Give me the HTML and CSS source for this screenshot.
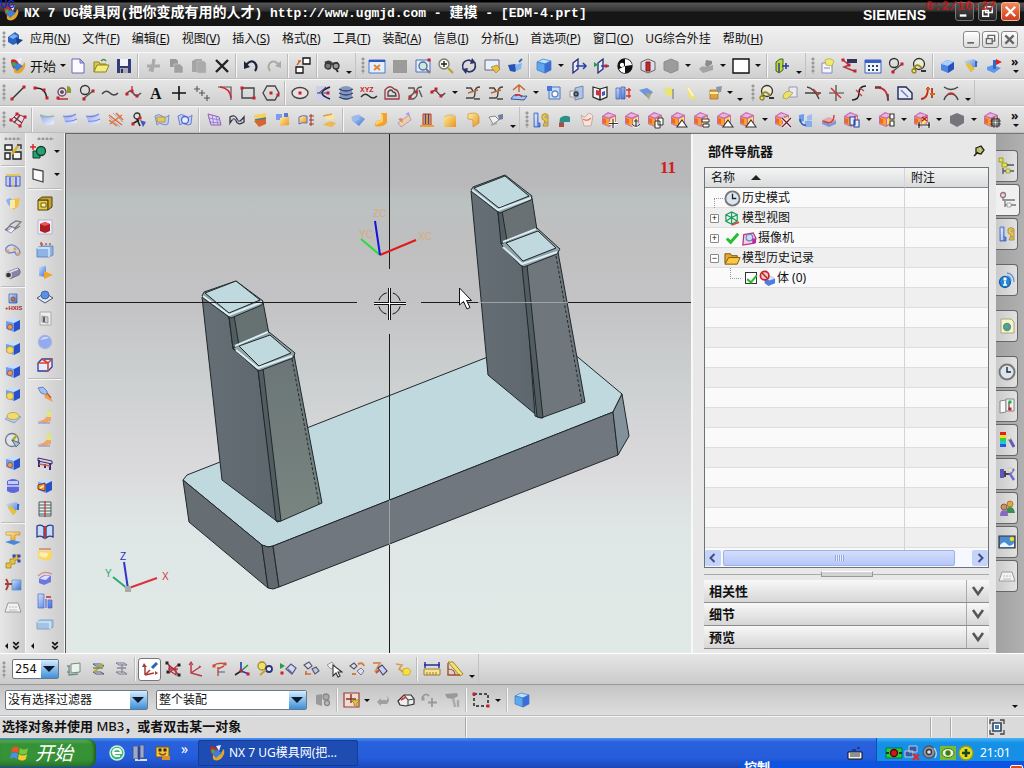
FILE: index.html
```html
<!DOCTYPE html>
<html lang="zh-CN">
<head>
  <meta charset="UTF-8">
  <title>NX 7 - 建模 - EDM-4.prt</title>
  <link rel="stylesheet" href="styles.css">
</head>
<body>

  <!-- shared gradients for the icons -->
  <svg class="defs" aria-hidden="true">
    <defs>
      <linearGradient id="blue" x1="0" y1="0" x2="1" y2="1"><stop offset="0" stop-color="#cfe2fb"/><stop offset="1" stop-color="#3f6fd8"/></linearGradient>
      <linearGradient id="pale" x1="0" y1="0" x2="1" y2="1"><stop offset="0" stop-color="#8fa6ec"/><stop offset="1" stop-color="#f2f5ff"/></linearGradient>
      <linearGradient id="gold" x1="0" y1="0" x2="1" y2="1"><stop offset="0" stop-color="#fff0a0"/><stop offset="1" stop-color="#eb9320"/></linearGradient>
      <linearGradient id="gray" x1="0" y1="0" x2="1" y2="1"><stop offset="0" stop-color="#f2f2f4"/><stop offset="1" stop-color="#8b8b93"/></linearGradient>
      <linearGradient id="front" x1="0" y1="0" x2="0" y2="1"><stop offset="0" stop-color="#6b7577"/><stop offset="1" stop-color="#788580"/></linearGradient>
      <linearGradient id="side" x1="0" y1="0" x2="1" y2="0"><stop offset="0" stop-color="#666f75"/><stop offset="1" stop-color="#5e666d"/></linearGradient>
    </defs>
  </svg>

  <header class="titlebar">
    <span class="icon" data-icon="nx"></span>
    <h1>NX 7 UG<span class="cn">模具网</span>(<span class="cn">把你变成有用的人才</span>) http://www.ugmjd.com - <span class="cn">建模</span> - [EDM-4.prt]</h1>
    <span class="brand">SIEMENS</span>
    <div class="win-buttons">
      <button class="win" data-icon="wmin" aria-label="最小化"></button>
      <button class="win" data-icon="wmax" aria-label="还原"></button>
      <button class="win close" data-icon="wclose" aria-label="关闭"></button>
    </div>
    <span class="osd">0:2/10:37</span>
    <span class="mark">UG</span>
  </header>

  <nav class="menubar">
    <span class="grip"></span>
    <span class="icon" data-icon="app"></span>
    <button>应用(<u>N</u>)</button>
    <button>文件(<u>F</u>)</button>
    <button>编辑(<u>E</u>)</button>
    <button>视图(<u>V</u>)</button>
    <button>插入(<u>S</u>)</button>
    <button>格式(<u>R</u>)</button>
    <button>工具(<u>T</u>)</button>
    <button>装配(<u>A</u>)</button>
    <button>信息(<u>I</u>)</button>
    <button>分析(<u>L</u>)</button>
    <button>首选项(<u>P</u>)</button>
    <button>窗口(<u>O</u>)</button>
    <button>UG综合外挂</button>
    <button>帮助(<u>H</u>)</button>
    <div class="mdi-buttons">
      <button class="mdi" data-icon="mmin" aria-label="最小化窗口"></button>
      <button class="mdi" data-icon="mmax" aria-label="还原窗口"></button>
      <button class="mdi" data-icon="mclose" aria-label="关闭窗口"></button>
    </div>
  </nav>

  <div class="bar-row">
    <div class="toolbar"><span class="grip"></span><button class="start-app"><span class="icon" data-icon="nx"></span>开始<i class="tri"></i></button><span class="tools" data-tools="new open save | cut copy paste del | undo redo | arrange | find V"></span></div>
    <div class="toolbar"><span class="grip"></span><span class="tools" data-tools="fit grayrect zoomwin zoom rotate pan persp | bluecube v wireA wireB bw section grayhex v grayplane v blank v | showhide V"></span></div>
    <div class="toolbar"><span class="grip"></span><span class="tools" data-tools="sketch tree sheet circline hook | block blend pushpull"></span></div>
    <button class="more" aria-label="更多"></button>
  </div>

  <div class="bar-row">
    <div class="toolbar"><span class="grip"></span><span class="tools" data-tools="line arc pocket circline spline splinept text plus points fillet rect hexa | ellipse conic helix xyz offset joinA bridgeC v joinB joinB project v sheetA sheetB book wrap leaf flag pen bucket t V"></span></div>
    <div class="toolbar"><span class="grip"></span><span class="tools" data-tools="hook note trimA trimB scurve corner chamfer stretch arch V"></span></div>
  </div>

  <div class="bar-row">
    <div class="toolbar"><span class="grip"></span><span class="tools" data-tools="mesh | surfA surfB surfB studio sweep patch surfC | net ribbon goldlayer goldcopy dims dune | globe bend roll drum tub pipe screw V"></span></div>
    <div class="toolbar"><span class="grip"></span><span class="tools" data-tools="pins boot jig gplus ganchor gcopy gtri glist gtri gtri v gx bluelink redtray gpaste v gboxes v gdim v darkhex v gframe"></span></div>
    <button class="more" aria-label="更多"></button>
  </div>

  <main class="work">
    <aside class="side narrow">
      <span class="grip-h"></span>
      <span class="tools" data-tools="layout | holes goldfan wing wire tube | axis cubeA cubeB cubeA cubeB disk gauge cubeA canister blend | tee stairs clamp tray"></span>
      <span class="side-end"><i class="tri left"></i><span class="icon chev" data-icon="down2"></span></span>
    </aside>
    <aside class="side wide">
      <span class="grip-h"></span>
      <div class="side-drop"><span class="tools" data-tools="union v"></span></div>
      <div class="side-drop"><span class="tools" data-tools="plane v"></span></div>
      <span class="tools" data-tools="| goldbox redcube bluebox goldarrow boss hole sphere redblue | screwB foot foot bracket goldface ladder bookB paper dome columns slab"></span>
      <span class="side-end"><i class="tri left"></i><span class="icon chev" data-icon="down2"></span></span>
    </aside>

    <section class="viewport">
      <svg class="scene" viewBox="66 134 625 519" preserveAspectRatio="xMidYMid slice">
        <g stroke="#20282c" stroke-width="1" stroke-linejoin="round">
          <!-- base plate -->
          <path d="M183 480L187 475L549 333L622 394L613 412L273 546L268 547L262 545Z" fill="#c0d9de"/>
          <path d="M183 480L262 545L268 588L189 522Z" fill="#666e74"/>
          <path d="M262 545L268 547L273 546L279 587L273 589L268 588Z" fill="#62696e"/>
          <path d="M273 546L613 412L618 455L279 587Z" fill="#70777e"/>
          <path d="M613 412L622 394L629 436L618 455Z" fill="#83929a"/>
          <!-- left post -->
          <path d="M202 297L229 317L233 349L258 369L278 522L222 480Z" fill="url(#side)"/>
          <path d="M229 317L263 302L269 334L234 349Z" fill="#667171"/>
          <path d="M258 369L294 355L322 503L281 521L277 522Z" fill="url(#front)"/>
          <path d="M258 369L263 368L281 521L276 521Z" fill="#525d61"/>
          <path d="M229 317L234 315L239 346L233 349Z" fill="#525d61"/>
          <path d="M202 296L204 292L236 281L263 301L262 305L231 318L228 316Z" fill="#91a2a8"/>
          <path d="M205 293L236 281L260 300L229 313Z" fill="#c0d9de"/>
          <path d="M233 348L269 332L295 353L293 358L259 371L256 369Z" fill="#91a2a8"/>
          <path d="M239 346L270 335L291 353L259 366Z" fill="#c0d9de"/>
          <path d="M203 296L229 315L262 302M235 346L268 332M236 350L258 368L292 356" fill="none" stroke="#d9eef2" stroke-width="2"/>
          <path d="M292 359L319 504" fill="none" stroke-dasharray="3 2"/>
          <!-- right post -->
          <path d="M471 191L498 212L502 243L524 266L540 418L488 375Z" fill="url(#side)"/>
          <path d="M498 212L532 198L537 230L502 245Z" fill="#697175"/>
          <path d="M524 266L558 252L585 402L541 418L535 416Z" fill="#6f777c"/>
          <path d="M522 266L527 265L543 418L537 417Z" fill="#525d61"/>
          <path d="M498 212L502 211L507 241L501 244Z" fill="#525d61"/>
          <path d="M471 190L473 187L505 175L532 196L531 200L500 213L497 211Z" fill="#91a2a8"/>
          <path d="M474 188L505 176L529 196L499 208Z" fill="#c0d9de"/>
          <path d="M501 244L537 228L560 249L557 254L524 267L520 265Z" fill="#91a2a8"/>
          <path d="M506 243L538 231L556 248L523 261Z" fill="#c0d9de"/>
          <path d="M472 190L498 210L531 198M503 242L536 229M503 247L522 264L557 252" fill="none" stroke="#d9eef2" stroke-width="2"/>
          <path d="M556 256L582 403" fill="none" stroke-dasharray="3 2"/>
        </g>
        <!-- crosshair -->
        <path d="M66 302.5H357M421 302.5H691M389.500 134V269M389.500 334V653" stroke="#1c1c1c" fill="none"/>
        <path d="M478 302.500H568M389.500 500V545" stroke="#9ea4a6" fill="none"/>
        <circle cx="389.500" cy="303.500" r="11" fill="none" stroke="#111" stroke-dasharray="11 6.300" stroke-dashoffset="-3"/>
        <path d="M374 303.500H406M389.500 288V320" stroke="#111" stroke-width="3" fill="none"/>
        <path d="M374 303.500H406M389.500 288V320" stroke="#fff" fill="none"/>
        <!-- work coordinate system -->
        <g stroke-width="2" fill="none">
          <path d="M380 255L416 240" stroke="#e01818"/>
          <path d="M380 255L361 239" stroke="#27dd3a"/>
          <path d="M380 255L375 221" stroke="#1414dd"/>
          <path d="M129 588L157 578" stroke="#d8333f"/>
          <path d="M128 589L113 577" stroke="#27ab70"/>
          <path d="M128 589L124 562" stroke="#3333d0"/>
        </g>
        <rect x="125" y="586" width="6" height="6" fill="#aaa"/>
        <g class="axis-label">
          <text class="faint" x="373" y="217">ZC</text>
          <text class="faint" x="359" y="238">YC</text>
          <text class="faint" x="418" y="240">XC</text>
          <text x="120" y="560" fill="#2b2bc8">Z</text>
          <text x="105" y="577" fill="#27ab70">Y</text>
          <text x="162" y="580" fill="#d8333f">X</text>
        </g>
        <path d="M459.500 288V305L463.500 301.500L467 309L470 307.500L466.500 300.500H471.500Z" fill="#fff" stroke="#111"/>
        <text class="frame-no" x="660" y="173">11</text>
      </svg>
    </section>

    <section class="navigator">
      <div class="nav-head"><h2>部件导航器</h2><span class="icon" data-icon="pin"></span></div>
      <div class="tree-box">
        <table class="tree">
          <thead>
            <tr><th>名称 <i class="sort"></i></th><th>附注</th></tr>
          </thead>
          <tbody>
            <tr><td><div class="node"><i class="leaf"></i><span class="icon" data-icon="clock"></span>历史模式</div></td><td></td></tr>
            <tr><td><div class="node"><button class="exp" aria-label="展开">+</button><span class="icon" data-icon="views"></span>模型视图</div></td><td></td></tr>
            <tr><td><div class="node"><button class="exp" aria-label="展开">+</button><span class="icon" data-icon="tick"></span><span class="icon" data-icon="camera"></span>摄像机</div></td><td></td></tr>
            <tr><td><div class="node"><button class="exp" aria-label="折叠">−</button><span class="icon" data-icon="folder"></span>模型历史记录</div></td><td></td></tr>
            <tr><td><div class="node child"><i class="elbow"></i><input type="checkbox" id="body0" checked><span class="icon" data-icon="body"></span><label for="body0">体 (0)</label></div></td><td></td></tr>
            <tr class="rest"><td></td><td></td></tr>
          </tbody>
        </table>
        <div class="hscroll">
          <button class="arrow" aria-label="向左"><svg viewBox="0 0 16 16"><path d="M9.500 4L5.500 8L9.500 12" fill="none" stroke="#3c4f86" stroke-width="2"/></svg></button>
          <div class="thumb"><i></i></div>
          <button class="arrow" aria-label="向右"><svg viewBox="0 0 16 16"><path d="M6.500 4L10.500 8L6.500 12" fill="none" stroke="#3c4f86" stroke-width="2"/></svg></button>
        </div>
      </div>
      <div class="splitter"><i></i></div>
      <button class="fold"><span>相关性</span><i><svg viewBox="0 0 14 12"><path d="M2 2L7 9L12 2" fill="none" stroke="#555" stroke-width="2.500"/></svg></i></button>
      <button class="fold"><span>细节</span><i><svg viewBox="0 0 14 12"><path d="M2 2L7 9L12 2" fill="none" stroke="#555" stroke-width="2.500"/></svg></i></button>
      <button class="fold"><span>预览</span><i><svg viewBox="0 0 14 12"><path d="M2 2L7 9L12 2" fill="none" stroke="#555" stroke-width="2.500"/></svg></i></button>
    </section>

    <div class="resource-tabs">
      <button data-icon="tabasm" aria-label="装配导航器"></button>
      <button data-icon="tabpart" aria-label="部件导航器" class="active"></button>
      <button data-icon="pins" aria-label="重用库"></button>
      <button data-icon="info" aria-label="HD3D 工具" class="apart"></button>
      <button data-icon="web" aria-label="浏览器" class="apart"></button>
      <button data-icon="clock" aria-label="历史记录" class="apart"></button>
      <button data-icon="palette" aria-label="系统材料"></button>
      <button data-icon="rainbow" aria-label="可视化"></button>
      <button data-icon="process" aria-label="加工向导"></button>
      <button data-icon="roles" aria-label="角色"></button>
      <button data-icon="scenery" aria-label="系统场景"></button>
      <button data-icon="tray" aria-label="面板"></button>
    </div>
  </main>

  <div class="bottom-row">
    <div class="toolbar"><span class="grip"></span><label class="combo layer"><select aria-label="工作图层"><option>254</option></select></label><span class="tools" data-tools="layerA layerB layerC | wcs! wcsorg axes wcsrot axesRGB sketchy play move pick swap orient glow | ruler angle V"></span></div>
  </div>

  <div class="select-row">
    <label class="combo filter"><select aria-label="选择过滤器"><option>没有选择过滤器</option></select></label>
    <label class="combo scope"><select aria-label="选择范围"><option>整个装配</option></select></label>
    <span class="tools" data-tools="gears | snap t arrowgray house grayplus hammer | marquee v | bluecube"></span>
    <i class="tri row-end"></i>
  </div>

  <footer class="status">
    <p>选择对象并使用 <span class="key">MB3</span>，或者双击某一对象</p>
    <span class="cell wide-cell"></span>
    <span class="cell c1"></span>
    <span class="cell c2"></span>
    <span class="cell c3"><span class="icon" data-icon="full"></span></span>
  </footer>

  <div class="taskbar">
    <button class="start"><svg viewBox="0 0 20 18"><path d="M2 4Q6 1 9 4L8 9Q5 6 1 9Z" fill="#f0522a"/><path d="M10 4Q14 7 18 4L17 9Q13 12 9 9Z" fill="#7cc83c"/><path d="M1 10Q5 7 8 10L7 15Q4 12 0 15Z" fill="#4a8ff0"/><path d="M9 10Q13 13 17 10L16 15Q12 18 8 15Z" fill="#fbc834"/></svg>开始</button>
    <div class="quick">
      <span class="icon" data-icon="ie"></span>
      <span class="icon" data-icon="servers"></span>
      <span class="icon" data-icon="smile"></span>
      <span class="chevs">»</span>
    </div>
    <button class="task"><span class="icon" data-icon="nx"></span>NX 7 UG模具网(把...</button>
    <span class="icon keyboard" data-icon="keyboard"></span>
    <div class="tray">
      <span class="icon" data-icon="rec"></span>
      <span class="icon" data-icon="net2"></span>
      <span class="icon" data-icon="speaker"></span>
      <span class="icon" data-icon="nvidia"></span>
      <span class="icon" data-icon="guard"></span>
      <time>21:01</time>
    </div>
    <div class="popup"><span>控制</span><i></i></div>
  </div>

  <script src="app.js"></script>
</body>
</html>
```

FILE: styles.css
```css
* {
  box-sizing: border-box;
}

body {
  margin: 0;
  height: 100vh;
  overflow: hidden;
  display: flex;
  flex-direction: column;
  background: #d6d6d6;
  color: #111;
  font-family: "Noto Sans", "Noto Sans CJK SC", sans-serif;
  font-size: 12px;
  line-height: 16px;
}

button, select, input {
  font: inherit;
  color: inherit;
}

button {
  border: 0;
  padding: 0;
  background: none;
  cursor: pointer;
}

.defs {
  position: absolute;
  width: 0;
  height: 0;
}

.icon {
  display: inline-flex;
  flex: none;
}

.icon svg, .tool svg {
  width: 18px;
  height: 18px;
  display: block;
}

/* title */
.titlebar {
  position: relative;
  height: 26px;
  flex: none;
  display: flex;
  align-items: center;
  padding: 0 4px 0 2px;
  background: linear-gradient(#000 0, #000 2px, #555 3px, #333 11px, #161616 12px, #161616);
  color: #fff;
}

.titlebar h1 {
  margin: 0 0 0 4px;
  flex: 1;
  font: bold 13px/20px "Liberation Mono", "Noto Sans CJK SC", monospace;
  white-space: pre;
}

.titlebar .cn {
  font-size: 14px;
}

.brand {
  font: bold 14px/20px "Liberation Sans", sans-serif;
  margin: 3px 29px 0 0;
}

.win-buttons, .mdi-buttons {
  display: flex;
  gap: 4px;
}

.win {
  width: 19px;
  height: 19px;
  margin-bottom: 4px;
  border: 1px solid #777;
  border-radius: 3px;
  background: linear-gradient(#555, #222);
}

.win.close {
  background: linear-gradient(#f08a5c, #d23c1c);
  border-color: #f0b8a0;
}

.win svg, .mdi svg {
  display: block;
  width: 100%;
  height: 100%;
}

.osd {
  position: absolute;
  right: 28px;
  top: 0;
  color: #d51414;
  opacity: 0.8;
  font: bold 13px/14px "Liberation Mono", monospace;
}

.mark {
  position: absolute;
  left: 0;
  top: 0;
  color: #2626b4;
  font: bold 10px/10px "Liberation Sans", sans-serif;
}

/* menu */
.menubar {
  height: 26px;
  flex: none;
  display: flex;
  align-items: center;
  padding-right: 6px;
  background: linear-gradient(#f1f1f1, #e2e2e2);
}

.menubar .icon {
  margin-right: 6px;
}

.menubar > button {
  margin-right: 12px;
  white-space: nowrap;
}

.mdi-buttons {
  margin-left: auto;
  gap: 2px;
}

.mdi {
  width: 17px;
  height: 17px;
  border: 1px solid #888;
  border-radius: 3px;
  background: linear-gradient(#fff, #dcdcdc);
}

/* toolbars */
.bar-row {
  height: 27px;
  flex: none;
  display: flex;
  gap: 3px;
  border-top: 1px solid #f8f8f8;
  border-bottom: 1px solid #bdbdbd;
  background: linear-gradient(#e6e6e6, #cfcfcf);
}

.toolbar {
  display: flex;
  align-items: center;
  border-right: 1px solid #c2c2c2;
}

.bar-row .toolbar:nth-last-child(2) {
  border-right: 0;
}

.grip {
  width: 6px;
  height: 17px;
  flex: none;
  background: radial-gradient(circle, #999 1px, transparent 2px) 2px 0 / 4px 4px repeat-y;
}

.tools {
  display: flex;
  align-items: center;
}

.tool {
  width: 23px;
  height: 23px;
  display: flex;
  flex: none;
  align-items: center;
  justify-content: center;
}

.tool.on {
  border: 1px solid #777;
  border-radius: 3px;
  background: #fff;
}

.sep {
  width: 6px;
  height: 24px;
  flex: none;
  background: linear-gradient(90deg, transparent 2px, #bbb 2px, #bbb 3px, #f6f6f6 3px, #f6f6f6 4px, transparent 4px);
}

.drop {
  width: 12px;
  height: 23px;
  flex: none;
  display: flex;
  align-items: center;
  justify-content: center;
}

.drop.tight {
  width: 8px;
}

.drop.over {
  align-items: flex-end;
  padding-bottom: 3px;
}

.tri {
  display: block;
  border: 3px solid transparent;
  border-top-color: #111;
  border-bottom: 0;
}

.tri.left {
  border: 3px solid transparent;
  border-right-color: #111;
  border-left: 0;
}

.start-app {
  width: 60px;
  display: flex;
  align-items: center;
  gap: 3px;
  padding-left: 3px;
  font-size: 13px;
  white-space: nowrap;
}

.start-app .tri {
  margin-left: 1px;
}

.more {
  position: relative;
  width: 14px;
  margin: 0 2px 0 auto;
}

.more::before {
  content: "»";
  position: absolute;
  left: 3px;
  top: 1px;
  font-weight: bold;
}

.more::after {
  content: "";
  position: absolute;
  left: 5px;
  bottom: 5px;
  border: 3px solid transparent;
  border-top-color: #111;
  border-bottom: 0;
}

/* work area */
.work {
  flex: 1;
  min-height: 0;
  display: flex;
}

.side {
  display: flex;
  flex-direction: column;
  align-items: center;
  padding-top: 4px;
  background: linear-gradient(90deg, #e6e6e6, #cdcdcd);
  border-right: 1px solid #f6f6f6;
}

.side.narrow {
  width: 26px;
}

.side.wide {
  width: 39px;
}

.side .tools {
  flex-direction: column;
}

.side .sep {
  width: 24px;
  height: 6px;
  background: linear-gradient(transparent 2px, #bbb 2px, #bbb 3px, #f6f6f6 3px, #f6f6f6 4px, transparent 4px);
}

.side.wide .sep {
  width: 34px;
}

.side-drop .tools {
  flex-direction: row;
}

.grip-h {
  width: 17px;
  height: 3px;
  flex: none;
  background: radial-gradient(circle, #999 1px, transparent 2px) 0 0 / 4px 4px repeat-x;
}

.side-end {
  margin-top: auto;
  width: 100%;
  display: flex;
  align-items: center;
  justify-content: space-between;
  padding: 0 4px 2px 5px;
}

.chev svg {
  width: 10px;
  height: 10px;
}

.viewport {
  flex: 1;
  min-width: 0;
  border-left: 1px solid #555;
  border-top: 1px solid #666;
  background: linear-gradient(#b6b6b6 0%, #b9b9bc 10%, #bbc1c1 13%, #bfbfc0 20%, #c4c4c6 34%, #ccd0d1 48%, #d6d6d9 58%, #dbdbde 66%, #dee7e5 76%, #e0e9e6 100%);
}

.scene {
  display: block;
  width: 100%;
  height: 100%;
}

.axis-label {
  font: 10px "Liberation Sans", sans-serif;
}

.axis-label .faint {
  fill: #e0a45c;
  opacity: 0.7;
}

.frame-no {
  font: bold 17px "Liberation Serif", serif;
  fill: #d31d1d;
}

/* part navigator */
.navigator {
  width: 305px;
  flex: none;
  display: flex;
  flex-direction: column;
  padding: 0 7px 4px 13px;
  border-top: 1px solid #777;
  background: #e8e8e8;
  box-shadow: inset 2px 0 #f8f8f8;
}

.nav-head {
  display: flex;
  align-items: center;
  justify-content: space-between;
  height: 33px;
  padding: 0 1px 0 4px;
}

.nav-head h2 {
  margin: 0;
  font-size: 13px;
  line-height: 18px;
}

.tree-box {
  flex: 1;
  min-height: 0;
  display: flex;
  flex-direction: column;
  border: 1px solid #6a737a;
  background: repeating-linear-gradient(#fafafa 0, #fafafa 19px, #dedede 19px, #dedede 20px, #efefef 20px, #efefef 39px, #dedede 39px, #dedede 40px) 0 20px;
}

.tree {
  flex: 1;
  width: 100%;
  border-collapse: separate;
  border-spacing: 0;
  table-layout: fixed;
}

.tree th {
  width: 200px;
  height: 20px;
  padding: 0 6px;
  text-align: left;
  font-weight: normal;
  background: linear-gradient(#f4f4f4, #d9dcdd);
  border-bottom: 1px solid #888;
}

.tree th + th {
  width: auto;
}

.tree th, .tree td {
  border-right: 1px solid #d4d4d4;
}

.tree th:last-child, .tree td:last-child {
  border-right: 0;
}

.tree td {
  height: 20px;
  padding: 0;
}

.tree .rest td {
  height: auto;
}

.sort {
  display: inline-block;
  margin: 0 0 2px 13px;
  border: 5px solid transparent;
  border-bottom-color: #222;
  border-top: 0;
}

.node {
  display: flex;
  align-items: center;
  height: 20px;
  padding-left: 5px;
  white-space: nowrap;
}

.node .icon svg {
  width: 17px;
  height: 17px;
}

.node .icon {
  margin-right: 1px;
}

.node .icon + .icon {
  margin-left: -2px;
}

.exp {
  width: 9px;
  height: 9px;
  margin-right: 5px;
  border: 1px solid #888;
  border-radius: 1px;
  background: #fff;
  font: 9px/7px "Liberation Sans", sans-serif;
}

.leaf, .elbow {
  width: 9px;
  height: 10px;
  margin: 10px 0 0 4px;
  border-left: 1px dotted #999;
  border-top: 1px dotted #999;
}

.leaf {
  margin-right: 1px;
}

.node.child {
  padding-left: 25px;
}

.elbow {
  width: 11px;
  height: 11px;
  margin: 0 0 9px 0;
  border-top: 0;
  border-bottom: 1px dotted #999;
}

.node input {
  appearance: none;
  width: 12px;
  height: 12px;
  margin: 0 2px 0 4px;
  border: 1px solid #333;
  background: #fff;
  position: relative;
}

.node input:checked::after {
  content: "";
  position: absolute;
  left: 3px;
  top: 0;
  width: 4px;
  height: 8px;
  border: solid #2ab82a;
  border-width: 0 2px 2px 0;
  transform: rotate(40deg);
}

.hscroll {
  display: flex;
  height: 17px;
  flex: none;
  background: #f6f8ff;
}

.arrow {
  width: 16px;
  height: 16px;
  border-radius: 2px;
  background: #c6d3f8;
}

.thumb {
  flex: 1;
  display: flex;
  align-items: center;
  justify-content: center;
  margin: 0 17px 1px 2px;
  border: 1px solid #9fb2e6;
  border-radius: 2px;
  background: linear-gradient(#d3defc, #b6c6f8);
}

.thumb i {
  width: 9px;
  height: 6px;
  background: repeating-linear-gradient(90deg, #90a4de 0, #90a4de 1px, #eef 1px, #eef 2px);
}

.splitter {
  height: 12px;
  flex: none;
  display: flex;
  align-items: center;
  justify-content: center;
  background: linear-gradient(#aaa, #aaa) 0 6px / 100% 1px no-repeat;
}

.splitter i {
  width: 52px;
  height: 6px;
  background: #d2d2d2;
  border: 1px solid #999;
  border-top-color: #fff;
}

.fold {
  height: 23px;
  flex: none;
  display: flex;
  align-items: center;
  padding-left: 5px;
  border-bottom: 1px solid #8c8c8c;
  background: linear-gradient(#f8f8f8, #d6d6d6);
  font-size: 13px;
  font-weight: bold;
}

.fold span {
  flex: 1;
  text-align: left;
}

.fold i {
  width: 23px;
  height: 22px;
  padding: 5px 4px;
  border-left: 1px solid #aaa;
}

.fold svg {
  display: block;
  width: 14px;
  height: 12px;
}

.resource-tabs {
  width: 28px;
  flex: none;
  display: flex;
  flex-direction: column;
  gap: 2px;
  padding-top: 16px;
  border-top: 1px solid #777;
  background: linear-gradient(90deg, #a2a2a2, #b0b0b0);
}

.resource-tabs button {
  width: 22px;
  height: 32px;
  display: flex;
  align-items: center;
  justify-content: center;
  border: 1px solid #666;
  border-left: 0;
  border-radius: 0 4px 4px 0;
  background: linear-gradient(90deg, #cacaca, #e2e2e2);
}

.resource-tabs button.active {
  width: 24px;
  background: #f0f0f0;
}

.resource-tabs .apart {
  margin-top: 12px;
}

.resource-tabs svg {
  width: 18px;
  height: 18px;
}

/* lower bars */
.bottom-row {
  height: 32px;
  flex: none;
  display: flex;
  border-top: 1px solid #fff;
  border-bottom: 1px solid #999;
  background: linear-gradient(#e6e6e6, #cacaca);
}

.combo {
  position: relative;
  display: block;
  height: 20px;
}

.combo select {
  appearance: none;
  display: block;
  width: 100%;
  height: 20px;
  padding: 0 20px 0 2px;
  border: 1px solid #6b7885;
  border-radius: 2px;
  background: #fff;
}

.combo::before {
  content: "";
  position: absolute;
  right: 1px;
  top: 1px;
  width: 17px;
  height: 18px;
  background: linear-gradient(#d3ecff, #3f8fd8);
  pointer-events: none;
}

.combo::after {
  content: "";
  position: absolute;
  right: 4px;
  top: 7px;
  border: 6px solid transparent;
  border-top-color: #0c1c30;
  border-bottom: 0;
  pointer-events: none;
}

.layer {
  width: 47px;
  margin: 0 4px 0 6px;
}

.layer select {
  font-family: "DejaVu Sans Mono", monospace;
}

.select-row {
  height: 31px;
  flex: none;
  display: flex;
  align-items: center;
  padding: 0 6px 0 5px;
  border-bottom: 1px solid #bbb;
  background: linear-gradient(#c4c4c4, #dedede);
}

.filter {
  width: 143px;
  margin-right: 8px;
}

.scope {
  width: 151px;
  margin-right: 4px;
}

.row-end {
  margin: 12px 0 0 auto;
}

.status {
  height: 22px;
  flex: none;
  display: flex;
  border-top: 1px solid #f4f4f4;
  background: #dadada;
}

.status p {
  flex: 1;
  margin: 0;
  padding-left: 2px;
  font-size: 13px;
  line-height: 18px;
  font-weight: bold;
}

.status .key {
  font-weight: 500;
}

.cell {
  height: 20px;
  border-left: 1px solid #aaa;
  box-shadow: inset 1px 0 #f6f6f6;
}

.wide-cell {
  width: 465px;
}

.c1 {
  width: 20px;
}

.c2 {
  width: 37px;
}

.c3 {
  width: 37px;
  padding-top: 1px;
}

/* taskbar */
.taskbar {
  position: relative;
  height: 30px;
  flex: none;
  display: flex;
  align-items: center;
  color: #fff;
  background: linear-gradient(#4a93f2 0, #2a62dd 4px, #245cdc 20px, #1c48b8);
}

.start {
  width: 96px;
  height: 28px;
  display: flex;
  align-items: center;
  gap: 5px;
  padding-left: 10px;
  border-radius: 0 8px 8px 0;
  background: linear-gradient(#62b862, #369236 5px, #369236 20px, #2a742a);
  box-shadow: inset -2px 0 3px #1e5c22;
  font-size: 19px;
  line-height: 24px;
  font-style: italic;
}

.start svg {
  width: 20px;
  height: 18px;
}

.quick {
  width: 102px;
  display: flex;
  align-items: center;
  gap: 5px;
  padding-left: 12px;
}

.chevs {
  margin: 0 0 8px 4px;
  font-size: 14px;
}

.task {
  width: 160px;
  height: 26px;
  display: flex;
  align-items: center;
  gap: 3px;
  padding-left: 9px;
  border: 1px solid #173c96;
  border-radius: 2px;
  background: #1d4cb2;
  white-space: nowrap;
}

.keyboard {
  margin: 0 12px 0 auto;
}

.tray {
  height: 30px;
  width: 148px;
  display: flex;
  align-items: center;
  padding-left: 8px;
  border-left: 1px solid #0d4fae;
  background: linear-gradient(#45b4f6 0, #1590e6 5px, #1590e6 22px, #1070c8);
}

.tray time {
  margin-left: 5px;
  font-size: 12px;
}

.popup {
  position: absolute;
  right: 0;
  bottom: 0;
  width: 283px;
  height: 7px;
  overflow: hidden;
  padding-left: 3px;
  background: #0d55e0;
  font-size: 13px;
  line-height: 13px;
  font-weight: bold;
}

.popup i {
  position: absolute;
  right: 1px;
  top: 4px;
  width: 13px;
  height: 13px;
  border: 1px solid #fff;
  border-radius: 2px;
  background: #dc4820;
}
```

FILE: app.js
```js
// small drawing helpers, every icon lives on an 18x18 grid
const ln = (d, c = '#333', w = 1.4) => `<path d="${d}" fill="none" stroke="${c}" stroke-width="${w}"/>`;
const sh = (d, f, c = 'none', w = 1) => `<path d="${d}" fill="${f}" stroke="${c}" stroke-width="${w}"/>`;
const ci = (x, y, r, f = 'none', c = '#333', w = 1.3) => `<circle cx="${x}" cy="${y}" r="${r}" fill="${f}" stroke="${c}" stroke-width="${w}"/>`;
const dots = (pts, c = '#c81e2e') => pts.map(p => `<rect x="${p[0] - 1.5}" y="${p[1] - 1.5}" width="3" height="3" fill="${c}"/>`).join('');
const cube = (top, left, right, edge = 'none') =>
  sh('M2 5L8 2L16 4L10 7Z', top, edge, .7) + sh('M2 5L10 7V16L2 13Z', left, edge, .7) + sh('M10 7L16 4V13L10 16Z', right, edge, .7);
const blueCube = cube('#c4ddfc', '#6c9df0', '#2850c8');
// purple and gold block used by the direct modelling tools
const goldBlock = sh('M1 5L7 1L15 4V12L8 16L1 13Z', '#c86cb0') + sh('M2 6L8 8V15L2 12.500Z', '#fca02c') + sh('M9 8L14 5.500V11L9 14Z', '#ffe060') + sh('M3 5L7 2.500L13 4L8 6.500Z', '#e8b4e0') + sh('M2 7L5 8V13L2 12Z', '#e86c28');
const sheet = (f, e) => sh('M2 5Q6 2 9 5T16 4L15 13Q12 15 9 13T4 14Z', f, e);

const icons = {
  nx: sh('M2 3Q5 1 8 4L12 10L6 13Q2 10 2 3Z', '#c8242c') + sh('M7 9Q3 13 6 16Q13 18 16 10Q17 6 15 5Q14 11 7 9Z', '#e8a428') + sh('M3 8L9 6L14 9L8 14Z', '#3c7ed8') + sh('M8 2L13 1L11 7Z', '#eef') + ci(5, 7, 2, '#3ca850', 'none'),
  app: sh('M2 7L9 2L13 5V12L7 15L2 12Z', '#2c62c0') + sh('M3 7L8 4L12 6L7 9Z', '#7db0f0') + sh('M10 8L17 10L11 15Z', '#1a3f90'),
  down2: ln('M4 2L9 7L14 2M4 9L9 14L14 9', '#111', 3),
  wmin: sh('M4 12H11V14.500H4Z', '#fff'),
  wmax: ln('M7 4H14V10H7ZM4 8H10V14H4Z', '#fff', 1.6),
  wclose: ln('M4 4L14 14M14 4L4 14', '#fff', 2.4),
  mmin: sh('M4 12H12V14H4Z', '#666'),
  mmax: ln('M6 8V4H14V11H11M4 8H11V14H4Z', '#666', 1.6),
  mclose: ln('M4 4L14 14M14 4L4 14', '#666', 2.8),

  new: sh('M3 2H11L15 6V16H3Z', '#fbfbff', '#6868b4') + sh('M11 2V6H15Z', '#b9c0ee', '#6868b4'),
  open: sh('M2 15V5H7L8 7H14V9', '#dccb4c', '#8a8420') + sh('M2 15L5 8H17L14 15Z', '#f2ec7a', '#8a8420') + ln('M9 4Q12 1 14 4', '#4c8c2c'),
  save: sh('M2 2H16V16H2Z', '#333c78') + sh('M5 2H13V9H5Z', '#f3f4fa') + sh('M5 11H13V16H5Z', '#aab') + sh('M6 12H8V16H6Z', '#334'),
  cut: ln('M10 2L8 15M3 9H16', '#aaa', 3.2) + ln('M5 14L8 9', '#aaa', 2),
  copy: sh('M3 2H9L11 4V10H3Z', '#9a9a9a') + sh('M7 7H13L16 10V16H7Z', '#a0a0a0', '#ddd', .5),
  paste: sh('M2 4L6 2H12V15H2Z', '#a5a5a5') + sh('M7 4H14L16 6V16H7Z', '#ababab', '#c4c4c4', .5),
  del: ln('M3 3L15 15M15 3L3 15', '#222', 2.4),
  undo: ln('M4 8Q9 2 13 6Q16 10 13 14', '#1d2338', 2.2) + sh('M2 4V12L8 10Z', '#1d2338'),
  redo: ln('M14 8Q9 2 5 6Q2 10 5 14', '#a9a9a9', 2) + sh('M16 4V11L10 9Z', '#a9a9a9'),
  arrange: sh('M9 1H16V7H9ZM2 10H9V16H2Z', '#fff', '#111', 1.3) + ln('M3 8L6 4M4 4H7', '#d06020', 1.3),
  find: ln('M2 6Q6 3 9 7L15 6', '#444', 2.4) + ci(5, 9, 3, '#777') + ci(13, 9, 3, '#999') + ln('M13 12L15 15', '#333', 2),
  fit: sh('M1 3H17V16H1Z', '#e4eeff', '#4a78d0') + sh('M1 3H17V5H1Z', '#2c58c0') + ln('M6 8L12 13M12 8L6 13', '#e08830', 2),
  grayrect: sh('M2 3H16V16H2Z', '#9b9b9b'),
  zoomwin: sh('M2 3H16V15H2Z', '#e0ecff', '#4a70c0') + ci(9, 9, 4, '#cde8e0', '#4c6a90') + ln('M12 12L16 16', '#777', 2) + dots([[15, 3]]),
  zoom: ci(7, 7, 5, '#f6f6ea', '#777') + ln('M4 7H10M7 4V10', '#222') + ln('M11 11L16 16', '#c0a030', 2.4),
  rotate: ln('M3 12Q1 4 9 3L13 5', '#2c3468', 1.6) + ln('M15 6Q17 14 9 15L5 13', '#2c3468', 1.6) + sh('M12 1L16 6L10 7Z', '#2c3468') + sh('M6 17L2 12L8 11Z', '#2c3468'),
  pan: sh('M2 3H16V13H2Z', '#e8f0ff', '#667') + sh('M8 10L14 8L17 12L13 16Z', '#eac23c', '#997010', .6),
  persp: sh('M2 8L9 7L12 10L9 15L4 14Z', '#2a50b0') + sh('M9 8L16 6L15 12L10 14Z', '#7eb6f4') + ln('M13 5L16 2', '#3468c8', 2),
  bluecube: cube('#b6e2fb', '#5fa8ee', '#3c6cd8', '#3a78c8'),
  wireA: sh('M3 6L8 2V12L3 16Z', '#e4ecff', '#222a6c', 1.3) + ln('M6 9H16M13 6L16 9L13 12', '#2340b0', 1.5),
  wireB: sh('M5 6L10 2V12L5 16Z', '#e4ecff', '#222a6c', 1.3) + ln('M8 9H16', '#2340b0', 1.5) + sh('M1 5L5 8L1 10Z', '#1f9c3c') + dots([[13, 9]]),
  bw: ci(9, 9, 7, '#111', '#111') + sh('M9 2A7 7 0 0 1 16 8L9 9ZM9 9L3 12A7 7 0 0 0 9 16Z', '#fff') + ci(6, 8, 1.5, '#fff', '#fff'),
  section: sh('M2 5L9 2L16 5V13L9 16L2 13Z', '#dcdce6', '#666', 1) + sh('M7 5H11V14H7Z', '#c8282c', '#801818'),
  grayhex: sh('M2 5L9 2L16 5V13L9 16L2 13Z', '#9c9c9c', '#8c8c8c'),
  grayplane: sh('M2 12Q5 8 9 10L16 8V13L6 16Z', '#a4a4a4') + sh('M8 8L9 3L15 4V7L10 10Z', '#8c8c8c'),
  blank: sh('M1 2H17V16H1Z', '#fff', '#111', 1.4),
  showhide: sh('M3 5L7 2H10V13L6 16L3 14Z', '#b8d838', '#48601c') + ln('M9 9H16M13 6V12', '#2838a0', 1.6) + ln('M6 6V15', '#2838a0'),
  sketch: sh('M4 6H14V16H4Z', '#f4f6ff', '#8888b8') + sh('M7 3Q12 0 16 4L14 9L8 8Z', '#eceb6c', '#a8a838', .7) + ln('M6 11H12', '#88a', 1),
  tree: sh('M6 2H16V6H6Z', '#33335c') + ln('M2 3L8 8L3 10L13 14', '#b8343c', 1.5) + dots([[2, 3], [8, 8], [14, 14]]),
  sheet: sh('M1 3H17V16H1Z', '#eef3ff', '#4060b8') + sh('M1 3H17V6H1Z', '#3860c8') + `<path d="M4 9H6M8 9H10M12 9H14M4 13H6M8 13H10M12 13H14" stroke="#345" stroke-width="2"/>`,
  circline: ci(7, 6, 4.500) + ln('M5 15L15 7', '#555', 1.5) + dots([[6, 15], [15, 7]]),
  hook: ci(9, 7, 5.500, '#ecebd8') + ln('M5 15Q2 9 8 8M8 8L12 11', '#9c8c20', 2) + ci(4, 14, 2, '#e8e060', '#8c8428') + ln('M11 14H16', '#333', 2),
  block: sh('M2 7L8 3L15 5V12L9 16L2 13Z', '#4a84e4') + sh('M2 7L8 3L15 5L9 9Z', '#a8d0fa') + sh('M9 9L15 5V12L9 16Z', '#2850b8'),
  blend: sh('M2 4L12 2L16 5L9 15Z', 'url(#blue)') + sh('M6 5L13 12L9 15L4 8Z', '#e8c03c') + ln('M14 4V10', '#3868c8', 2),
  pushpull: sh('M2 10L8 8L16 11L9 16L2 13Z', '#5a98ee') + sh('M8 3H11V12H8Z', '#3468c8') + sh('M11 2L17 5L11 8Z', '#d22'),

  line: ln('M3 15L15 3', '#333', 1.5) + dots([[3, 15], [15, 3]]),
  arc: ln('M3 4Q13 3 15 14', '#222', 1.5) + dots([[3, 4], [15, 14]]) + dots([[12, 6]]),
  pocket: ci(7, 8, 4, '#e6dce8', '#6c4060') + ci(7, 8, 1.2) + sh('M12 2Q17 2 16 9H12Z', '#8a9c2c') + ln('M3 15H13', '#c0303c', 1.6) + dots([[3, 14]]),
  spline: ln('M1 10Q5 5 9 9T17 9', '#444', 1.6),
  splinept: ln('M2 11Q6 4 9 9T17 9', '#555', 1.5) + dots([[3, 10], [8, 7], [13, 12]]) + ln('M8 2V7', '#c33'),
  text: `<text x="3" y="15" font-family="Liberation Serif" font-weight="bold" font-size="16" fill="#111">A</text>`,
  plus: ln('M9 2V16M2 9H16', '#111', 1.6),
  points: ln('M4 2V8M1 5H7M9 6V12M6 9H12M14 11V17M11 14H17', '#555', 1.1),
  fillet: ln('M2 3H15V16', '#555', 1.2) + ln('M4 3Q14 4 15 14', '#d8202c', 1.6),
  rect: ln('M3 4H15V14H3Z', '#444', 1.4) + dots([[3, 4], [15, 14]]),
  hexa: ln('M5 2H13L17 9L13 16H5L1 9Z', '#444', 1.3) + dots([[9, 9], [16, 11]]),
  ellipse: `<ellipse cx="9" cy="9" rx="8" ry="5.500" fill="#ecdfe0" stroke="#444" stroke-width="1.300"/>` + dots([[9, 9]]),
  conic: sh('M2 2H16V16H2Z', '#ccd0ea') + ln('M16 3Q0 9 16 15', '#223', 1.5) + ln('M3 9H14M12 3L5 9', '#446', 1) + dots([[14, 9]]),
  helix: sh('M3 4Q9 0 15 4V14Q9 18 3 14Z', '#8497c0') + ln('M2 5Q9 9 16 5M2 9Q9 13 16 9M2 13Q9 17 16 13', '#33456c', 1.4),
  xyz: `<text x="0" y="8" font-family="Liberation Sans" font-weight="bold" font-size="7" fill="#c22">XYZ</text>` + ln('M1 13Q5 8 9 12T17 12', '#333', 1.5),
  offset: ln('M2 15V6Q7 0 11 5Q17 6 16 15Z', '#993844', 1.3) + ln('M5 12V8Q8 4 10 8Q13 8 13 12Z', '#444', 1.3),
  joinA: ln('M2 4H8Q10 9 4 12M16 3Q10 3 11 8T7 15H2M13 6L16 13', '#555', 1.4) + dots([[10, 8], [4, 13]]),
  bridgeC: ln('M2 9Q6 4 9 9T16 9', '#444', 1.4) + dots([[3, 8], [7, 5], [12, 12]]),
  joinB: ln('M2 4H7L9 7M16 3Q11 3 11 8T9 14H2M10 15H16', '#444', 1.4) + ln('M4 9L14 6', '#c06a30', 1.4),
  project: ln('M3 6L9 1L15 6M9 1V8', '#c8622c', 1.4) + sh('M1 15Q4 9 9 11T17 12L14 16Z', '#a8c8f0', '#2c58a8') + ln('M5 12Q9 9 12 13', '#d22', 1.4),
  sheetA: sh('M4 3H15V15H4Z', '#cadcf8', '#4878c0') + sh('M2 2H7V7H2Z', '#4878d8') + ci(10, 10, 3, '#fff', '#6888c0'),
  sheetB: sh('M7 4L15 2V14L7 16Z', '#a9c6f0', '#7888a8') + sh('M2 7H10V13H2Z', '#eee', '#999') + ci(8, 10, 2, '#68a'),
  book: sh('M2 3L9 5L16 3V13L9 16L2 13Z', '#f4f4f8', '#222', 1.2) + ln('M9 5V16', '#222') + sh('M5 6L10 7V12L5 11Z', '#d0303c') + sh('M11 8L14 7V11L11 12Z', '#3c58b8'),
  wrap: sh('M2 4H6V15H2ZM7 3H11V15H7Z', 'url(#blue)', '#4058b0', .7) + ln('M12 6H17M12 12H17M15 4V14', '#e03828', 1.4),
  leaf: sh('M2 6L10 4L16 8L11 14Z', '#6e96dc') + sh('M9 9L14 10L12 16Z', '#b8a86c'),
  flag: sh('M5 3L14 5L13 13L5 10Z', '#eee46c') + ln('M13 5V15', '#8898b0', 1.6) + sh('M2 5L5 3V9Z', '#cde'),
  pen: sh('M4 3Q6 2 8 8L14 15L6 14Z', '#f0e26c') + ln('M5 4L10 12', '#fff8c8', 1.6),
  bucket: sh('M4 6H12V15H4Z', '#e0a040', '#9c6820', .7) + sh('M10 3L16 2L15 8L11 9Z', '#8898a8') + ln('M4 9H12', '#fff0a0', 2),
  note: sh('M8 3H16V13H8Z', '#e9e9f8', '#9898b0') + sh('M2 14Q2 8 8 7L12 9L6 15Z', '#eae26c', '#a09a30', .7),
  trimA: ln('M1 9H17M3 3Q10 4 15 15', '#444', 1.4) + ln('M9 5L15 11', '#c83838', 1.7),
  trimB: ln('M9 1V17M2 9H17', '#444', 1.2) + ln('M4 4L14 14', '#d03030', 1.5),
  scurve: ln('M2 16Q9 16 9 9T16 2', '#222', 1.6) + ln('M6 6L12 12M10 4L14 7', '#c83838', 1.2),
  corner: ln('M2 4Q14 2 15 16', '#c82c38', 1.8) + ln('M2 3H8M15 10V17', '#444'),
  chamfer: sh('M2 3H10L16 9V15H2Z', '#e8eaf8', '#222a50', 1.4) + ln('M5 6L12 13', '#6880b8'),
  stretch: ln('M2 15Q9 15 9 3M13 14V4', '#c03018', 1.8) + ln('M7 5H11M11 10H16', '#d86818', 1.8),
  arch: ln('M2 3Q9 8 16 3M2 16Q4 10 9 10T16 16', '#444', 1.5) + ln('M5 11Q9 7 13 11', '#d03030', 1.6),

  mesh: sh('M2 9L8 3L16 6L11 15Z', '#f0d8dc', '#8c3848') + ln('M5 6L13 12M11 4L5 12', '#604050') + dots([[2, 9], [8, 3], [16, 6], [11, 15]]),
  surfA: sh('M2 4Q8 7 16 5V13Q9 15 5 13Z', 'url(#pale)') + ln('M2 4Q8 7 16 5', '#8fb8a8'),
  surfB: sh('M2 5L15 3L16 12Q10 12 6 15Z', 'url(#pale)') + ln('M2 5Q9 7 15 3M4 10Q10 11 16 8', '#7888e0', 1.2),
  studio: ln('M2 4L15 14M3 13L15 4M2 9L10 15M9 2L16 9', '#e07038', 1.5) + ln('M2 6L13 16M6 2L16 11', '#b0a0b8', 1),
  sweep: ci(7, 5, 3) + ln('M7 8L10 15M2 13L9 9', '#222', 1.6) + sh('M10 9L16 11L13 16Z', '#4858b8') + dots([[3, 13], [10, 7]], '#c22'),
  patch: sheet('#bcd0f2', '#7890c8') + sh('M4 6H12V11H4Z', '#e8c85c', '#a88828', .7),
  surfC: sheet('#c4cff8', '#6880d8') + ci(9, 9, 3.500, '#e6ecff', '#5068c8'),
  net: sh('M3 3L14 6L16 14L6 14Z', '#e0d4f4', '#a058a8') + ln('M7 4L9 14M11 5L13 14M3 7L15 9M4 11L16 12', '#8c80d8', .9),
  ribbon: ln('M2 6Q7 3 9 8T16 6V11Q10 15 8 10T2 12Z', '#334', 1.3) + ln('M4 8L14 11', '#88a', 1),
  goldlayer: sh('M3 4L15 2V8L4 11Z', '#f8d05c') + sh('M3 10L15 7V13L8 16Z', '#d8662c') + ln('M4 9L15 7', '#3c7c98', 1.5),
  goldcopy: sh('M2 3H8V9H2Z', '#7c9cf0') + sh('M6 7L15 5V14L6 15Z', 'url(#gold)') + sh('M10 2H14V6H10Z', '#5878d8'),
  dims: sh('M2 6Q5 4 10 5V12Q5 11 2 13Z', 'url(#gold)', '#5870c0') + ln('M12 5H17M12 9H17M12 13H17M14 3V15', '#a03838', 1.1),
  dune: sh('M3 5L12 3L16 7L8 9Z', '#fbe49c') + sh('M3 14Q9 8 16 12L12 16Z', '#f0b848') + ln('M3 5L12 3', '#e09c50'),
  globe: sh('M2 9L9 3L16 8L10 15Z', 'url(#blue)') + sh('M2 6L7 4L11 8L5 11Z', '#9cbce8'),
  bend: sh('M9 2H15V12Q10 17 3 15L4 10L9 9Z', '#f2a030') + sh('M9 2L11 4V11L4 14L4 10L9 9Z', '#ffd060'),
  roll: sh('M3 12L14 4L16 9L6 16Z', '#f0cfa0', '#b898c8') + sh('M10 3L14 1L15 5Z', '#a8a0e0') + sh('M3 8L7 7L8 12Z', '#d48870'),
  drum: sh('M5 3H13V14H5Z', '#f0a838', '#b83838') + ln('M7.500 3V13M10.500 3V13', '#3848a8', 1.3) + ln('M2 15H16', '#e8a040', 2),
  tub: sh('M3 5Q9 0 15 5V16H3Z', 'url(#gold)') + ln('M3 6Q9 2 15 6', '#c8c8b0'),
  pipe: sh('M4 3Q14 0 15 6V12L9 16V9L4 8Z', 'url(#gold)', '#c89030', .7),
  screw: sh('M2 6L8 5L12 9L6 13Z', '#f0f0f0', '#888') + sh('M11 4L16 3V8L12 9Z', '#707ca0') + ln('M4 14L10 12', '#aaa', 2),

  pins: sh('M2 2H6V12H8V16H2Z', 'url(#blue)', '#3458b0', .7) + ln('M4 4V15', '#fff', 1) + sh('M10 4Q13 1 16 4V15H11L13 10L10 8Z', '#e8c84c', '#9c7a20', .7) + ci(14, 6, 1, '#fff', '#777', .7) + ci(14, 12, 1, '#fff', '#777', .7),
  boot: sh('M5 7Q10 3 15 6V11H9V15H4Z', '#2c9088') + sh('M4 12H9V16H4Z', '#b84838'),
  jig: sh('M3 4Q7 8 9 4T15 5L13 15H6Z', '#f8e4dc', '#c8a8a0') + ln('M5 8Q9 11 13 7', '#d88870'),
  gplus: goldBlock + ln('M12 8V17M8 12.500H17', '#fff', 3) + ln('M12 8V17M8 12.500H17', '#333', 1.2),
  ganchor: goldBlock + ln('M12 8V16M8 13Q12 18 16 13M10 10H14', '#fff', 2.8) + ln('M12 8V16M8 13Q12 18 16 13M10 10H14', '#333', 1.2),
  gcopy: goldBlock + sh('M11 7H16V14H11ZM8 10H13V17H8Z', '#fff', '#333', 1),
  gtri: goldBlock + sh('M12 9L17 16H7Z', '#fff', '#333', 1.1),
  glist: goldBlock + sh('M9 8H16V11H9ZM10 13H16V16H10Z', '#fff', '#333', 1),
  gx: goldBlock + ln('M8 7L17 16M17 7L8 16', '#fff', 3) + ln('M8 7L17 16M17 7L8 16', '#6a1c30', 1.4),
  bluelink: sh('M2 4L7 3V10L2 11Z', '#6c9cf0') + sh('M10 5L15 3V9L10 10Z', '#a0bcf4') + sh('M8 10H15V16H8Z', '#88acec') + ln('M3 8Q4 15 9 14', '#2c58b0', 1.6),
  redtray: sh('M2 9L10 13L16 9V13L9 16L2 13Z', '#7c98dc') + sh('M2 9L9 6L16 9L10 13Z', '#e8a8a8') + ln('M3 10L9 12Q14 11 14 4', '#d04038', 1.5),
  gpaste: goldBlock + sh('M7 6H12V14H7ZM11 9H16V16H11Z', '#e6eeff', '#2c4898', 1.1),
  gboxes: goldBlock + sh('M12 3H16V8H12ZM12 10H16V15H12Z', '#fff', '#333', 1.1),
  gdim: goldBlock + ln('M5 14H17M6 11V17M16 11V17', '#fff', 2.6) + ln('M5 14H17M6 11V17M16 11V17', '#111', 1.2) + ln('M9 6L14 10M14 6L9 10', '#a22', 1.2),
  darkhex: sh('M2 5L9 2L16 5V12L9 16L2 12Z', '#77747c'),
  gframe: goldBlock + sh('M9 8H16V15H9Z', '#fff', '#111', 1.1) + ln('M7 10H18M7 13H18M11 6V17M14 6V17', '#333', .8),

  layout: sh('M1 2H8V7H1ZM1 10H6V16H1ZM9 9H17V16H9Z', '#f4f4f4', '#222', 1.4) + ln('M8 11L14 3', '#d8b020', 2.4) + ln('M13 2H17V6', '#333'),
  holes: sh('M2 4H16V14H2Z', '#c4d0f8', '#5060b8') + ln('M6 5V15M12 5V15', '#4858c0', 1.4) + ln('M2 3H16', '#e8c850', 1.8) + ln('M9 5V15', '#e8c850', 1.2),
  goldfan: sh('M2 5Q5 2 8 4V13Q4 11 2 5Z', '#8cb0f0') + sh('M9 4L16 3L14 12L9 15Z', '#f0c048') + sh('M6 5H11V13H6Z', '#fbe9a8'),
  wing: ln('M1 12L6 8L11 10L17 4L12 3L7 6L2 12L8 13L16 8', '#778', 1.2) + sh('M3 13L8 9L11 11L7 15Z', '#eef', '#88a', .8),
  wire: ln('M2 7Q6 2 11 5T16 12Q13 17 11 11L5 12Q1 11 2 7', '#7088d0', 1.4) + dots([[4, 10], [11, 8], [14, 13]], '#e0a868'),
  tube: sh('M3 8L14 4Q18 7 15 11L6 15Z', '#8484ac', '#555', .6) + ci(4.500, 11, 3, '#333', '#ccc') + ln('M6 8L14 5', '#e0e0f0', 1.8),
  axis: sh('M5 1H13V10H5Z', 'url(#blue)', '#3858a8', .7) + ci(9, 6, 2, '#c87038', '#7c4020', .6) + `<text x="1" y="17" font-family="Liberation Sans" font-weight="bold" font-size="6" fill="#b02222">+HXIS</text>`,
  cubeA: blueCube + ci(6, 11, 2.500, '#e8a058', '#a84820', .8),
  cubeB: blueCube + ci(6, 11, 3.500, '#f4d860', '#c89c28', .8),
  disk: sh('M1 11L8 6L17 9L10 15Z', '#b8c8f0', '#7888c0', .7) + `<ellipse cx="9" cy="8" rx="6" ry="3.500" fill="#f0dc70" stroke="#b8a030" stroke-width="0.800"/>`,
  gauge: ci(8, 9, 6.500, '#dde4ec', '#778') + ln('M8 10L13 4', '#a8b020', 2.4) + sh('M8 9L16 12L12 16Z', '#a8bcd8', '#456', .8),
  canister: sh('M3 4Q9 0 15 4V14Q9 18 3 14Z', '#5a68dc') + sh('M4 4H14V7H4Z', '#c4ccf8') + ln('M3 9H15', '#dde', 1.4),
  tee: sh('M2 3H16V6H11V12H7V6H2Z', 'url(#gold)', '#b88828', .6) + sh('M1 13L8 11L17 13L10 16Z', '#4888dc'),
  stairs: sh('M2 11H6V7H10V3H14V8H11V12H7V16H2Z', '#e8c440', '#987818', .7) + dots([[10, 4], [15, 9], [15, 4]], '#3848a8'),
  clamp: sh('M8 5H17V15H8Z', 'url(#blue)', '#5898b0', .7) + ln('M2 4Q6 9 2 15M1 9H8', '#a83c38', 2),
  tray: sh('M4 5H14L17 14H1Z', '#f2f2f2', '#9a9a9a', 1) + ln('M5 9H7M8 9H10M11 9H13M5 12H13', '#bbb', 1.2),
  union: ln('M3 1V7M0 4H6', '#d22', 1.4) + sh('M3 8H10V15H3Z', '#28a070', '#113c2c') + ci(11, 8, 4.500, '#28a070', '#113c2c'),
  plane: sh('M3 3L13 5V16L3 13Z', '#fafafa', '#444', 1.3),
  goldbox: sh('M2 5H12V15H2Z', '#e8cc48', '#4c4010') + sh('M2 5L6 2H16V12L12 15V5Z', '#c4a02c', '#4c4010') + sh('M5 8H10V12H5Z', '#fff4b0', '#6c5c18'),
  redcube: sh('M2 2H16V16H2Z', '#eef', '#aab', .8) + sh('M4 6L9 4L14 6V13L9 15L4 13Z', '#b01c24') + sh('M4 6L9 4L14 6L9 8Z', '#f05058'),
  bluebox: sh('M1 7L5 5H17V14L13 16H1Z', '#8eb4e4', '#5080b8', .8) + ln('M4 3H7M9 3H11M13 3H15M5 1L6 5', '#c85838', 1.4) + ln('M1 7H13V16', '#d8ecff'),
  goldarrow: sh('M3 3L10 2V13L3 12Z', 'url(#blue)') + sh('M8 7L17 11L8 15Z', '#f0a428'),
  boss: sh('M1 11L9 6L17 11L9 16Z', '#dfe6f4', '#556') + ci(9, 8, 4, '#5c90e0', '#3058a8', .8),
  hole: sh('M4 2H15V15H4Z', '#ececec', '#aaa') + sh('M6 6L12 7V13L6 12Z', '#ccc', '#999') + ln('M8 7V12', '#444', 1.6),
  sphere: ci(9, 9, 6.500, '#93aaf0', '#a4b4e0') + sh('M4 7Q8 2 13 5Q9 6 4 7Z', '#d8e2ff'),
  redblue: sh('M2 7L6 3H16V11L12 15H2Z', '#e8ecff', '#2c3c98', 1.3) + ln('M2 7H12V15M6 3L12 7', '#d84428', 1.6) + ln('M12 7L16 3', '#d84428', 1.6),
  screwB: sh('M2 3L7 2L11 6V10L5 8Z', '#a0c0f4', '#5070b8', .8) + sh('M8 9L14 11L17 17L9 13Z', '#f0a050') + ln('M11 8L15 13', '#c85838', 1.5),
  foot: sh('M11 2L15 3V13L8 15L1 13Q9 13 11 8Z', '#f0a468') + sh('M11 2L15 3V9L11 9Z', '#dce87c') + ln('M2 15H14', '#8088c0', 1),
  bracket: sh('M2 4L16 7V10L2 7Z', '#f0c8c0', '#2c2c88') + ln('M3 6V13M14 9V16M9 10V14', '#2c2c88', 2) + ln('M3 10L14 12', '#d06040', 1.5),
  goldface: blueCube + sh('M2 8L9 6V14L2 12Z', '#f0963c', '#803018', 1) + ln('M4 11L8 9', '#fff0a0', 1.5),
  ladder: sh('M3 2H15V16H3Z', '#e4ecec', '#4c5c5c') + ln('M3 5H15M3 8H15M3 11H15M3 14H15', '#4c5c5c', 1.2) + ln('M9 1V17', '#b8342c', 1.2),
  bookB: sh('M1 3Q5 1 8 4V15Q5 12 1 14ZM17 3Q13 1 10 4V15Q13 12 17 14Z', '#c8dafa', '#2c3c88', 1.3) + ln('M9 3V15', '#c03028', 1.8),
  paper: sh('M2 5H16V12L11 15L2 12Z', '#f8d860') + ln('M3 3H15', '#e07860', 1.4) + sh('M4 6L13 7L10 12L3 10Z', '#fbeeb0'),
  dome: sh('M3 10Q7 4 15 7V13L8 16L3 14Z', '#6c78e0') + sh('M4 10Q8 5 14 7L10 11Z', '#dce0fc') + ln('M2 7Q8 1 16 5', '#e08878', 1.2),
  columns: sh('M2 2H8V16H2ZM12 8H16V16H12Z', 'url(#blue)', '#5868c8', .7) + ln('M10 5H15', '#d04838', 1.8) + ln('M10 7V16', '#8898e0', 2),
  slab: sh('M1 7L4 5H17V12L14 14H1Z', '#a4c4e4', '#84a4cc') + ln('M1 7H14V14', '#e4f2fc', 1.2),

  pin: sh('M6 6L11 4L14 8L11 12L6 11Z', '#c8cc50', '#222', 1.3) + ln('M4 14L8 10', '#222', 1.6) + ci(10, 7, 1.2, '#fff', '#777', .6),
  clock: ci(9, 9, 7.500, '#dce6f0', '#777', 2) + ln('M9 4V9H13', '#222', 1.4),
  views: ln('M2 5L8 2L14 5V12L8 15L2 12ZM2 5L8 8L14 5M8 8V15M8 2V8M2 12L8 8L14 12', '#1c9c5c', 1.3) + ln('M8 16L16 13', '#e03828', 1.6),
  tick: ln('M3 9L7 13L15 4', '#25c032', 3.2),
  camera: sh('M4 5L14 3L17 9L15 14L3 16Z', '#f0d0f0', '#c03078', 1.3) + ci(10, 8, 3.500, '#c8dcf4', '#6888b0') + sh('M13 9H17V14H13Z', '#b828a8'),
  folder: sh('M1 14V4H7L8 6H14V8', '#e8a828', '#7c5410') + sh('M1 15L5 8H17L14 15Z', '#fbc840', '#7c5410'),
  body: sh('M6 8L12 6L17 9V14L10 17L6 14Z', '#4c7ce4') + sh('M6 8L12 6L17 9L11 11Z', '#d4e0fc') + ci(6, 6, 4.500, '#f4c8c8', '#c8202c', 1.8) + ln('M3 3L9 9', '#c8202c', 1.6),

  tabasm: sh('M1 1H5V5H1ZM4 6H9V10H4Z', '#e8e438', '#8c8c20', .8) + ln('M9 8H16M5 11V17M5 14H16', '#555', 1.3) + sh('M8 12H12V16H8Z', '#e8e438', '#888', .7),
  tabpart: ln('M4 3V9H16M6 10V16M6 14H17', '#777', 1.3) + ci(4, 4, 2.500, '#e8dce0', '#987078') + sh('M8 12H12V16H8Z', '#f4f4f4', '#999', .8),
  info: ci(7, 11, 5.500, '#2088d8', '#1460a8') + ln('M7 10V14M5 14H9', '#fff', 1.7) + dots([[7, 8]], '#fff') + ln('M9 2Q16 3 16 11M9 5Q13 6 13 10', '#6898d8', 1.4),
  web: sh('M3 2H13L16 5V16H3Z', '#f4f4d8', '#aaa870') + ci(9, 10, 3.500, '#4890d8', '#6c9c40') + sh('M7 9L10 8L9 12Z', '#58b858'),
  palette: sh('M2 4L8 3V15L2 16Z', '#f8f8f8', '#888') + sh('M8 2H16V14H8Z', '#f2f2f2', '#888') + ln('M11 5V13', '#666') + dots([[12, 5]], '#2a4') + dots([[12, 12]], '#c22'),
  rainbow: sh('M2 1H8V4H2Z', '#e02020') + sh('M2 4H8V7H2Z', '#f0e020') + sh('M2 7H8V10H2Z', '#30d040') + sh('M2 10H8V13H2Z', '#20c8d8') + sh('M2 13H8V16H2Z', '#2858e0') + ln('M11 7L16 16', '#6858b8', 3) + dots([[11, 7]], '#f0e89c'),
  process: sh('M2 4H6V13H2Z', '#5c58b8') + ln('M6 9H12M7 6V12', '#444', 2) + ln('M16 4L12 9L16 15', '#6c68c8', 2.4) + ci(12, 5, 2, '#f0ecb0', '#ccc'),
  roles: ci(12, 5, 3, '#e0a848', '#9c6c20', .8) + sh('M8 14Q8 8 12 8T17 14Z', '#38904c') + ci(6, 8, 3, '#c89068', '#7c4c30', .8) + sh('M2 17Q2 11 6 11T10 17Z', '#8868c0'),
  scenery: sh('M1 3H17V15H1Z', '#4c8cd0', '#333', 1.2) + sh('M2 12Q6 7 9 11T16 10V14H2Z', '#eef6fc') + ci(14, 6, 1.7, '#f4e838', '#e8d028'),

  layerA: sh('M5 4L14 3V12L5 13Z', '#eaf2ec', '#6c8c7c') + ln('M3 6V15L12 14', '#6c8c7c', 1.3) + ln('M1 6H4M1 12H4', '#889'),
  layerB: sh('M4 4H12L15 6H7ZM4 12H12L15 14H7Z', '#e4ece4', '#557') + ln('M14 4L5 12', '#d0a030', 2) + ln('M4 8H14', '#4a9c58', 1.5),
  layerC: sh('M4 3H12L15 5H7ZM4 12H12L15 14H7Z', '#e8ecec', '#778') + ln('M5 8H14M10 4V13', '#889', 1.3),
  wcs: ln('M4 15V6M4 15L13 13M4 15L9 10', '#a83c38', 1.5) + sh('M3 3L6 7H1ZM14 11L17 13L14 15Z', '#a83c38') + ln('M11 8L16 3', '#2864b8', 3),
  wcsorg: ln('M4 4L14 14M14 5L5 13M4 9H14', '#c43848', 1.3) + ln('M5 6L12 10V15L6 11Z', '#a02838', 1.2) + dots([[3, 3], [15, 5], [15, 15], [4, 12]], '#222'),
  axes: ln('M4 3V13L15 16M4 13L13 7', '#b83c48', 1.5) + ln('M2 5L4 2L6 5M12 6L14 7', '#b83c48', 1.2),
  wcsrot: ln('M8 16V7M8 9L14 6M3 6Q8 2 15 4', '#c85038', 1.5) + ln('M8 12H15', '#5870a0', 1.2) + dots([[4, 6], [15, 4]], '#c85038'),
  axesRGB: ln('M8 11V2M8 11L16 14', '#1c3cb8', 1.6) + ln('M8 11L15 5', '#20983c', 1.6) + ln('M8 11L2 15', '#222', 1.6) + dots([[8, 11], [15, 14]]),
  sketchy: ci(6, 6, 4, '#f0e070', '#a09028') + ci(13, 9, 3, '#e8ecff', '#28347c', 1.8) + ln('M4 15L10 10', '#c8a030', 2),
  play: sh('M1 3L6 6L1 9Z', '#24a040') + dots([[3, 13]]) + sh('M7 9L12 4L17 8L13 14Z', '#d8d8ec', '#555a88', 1.2) + ln('M9 9L13 13', '#66a'),
  move: sh('M2 5L7 2L10 6L6 9Z', '#dcdff0', '#556', 1.1) + sh('M10 9L14 7L17 11L13 14Z', '#bcc6e8', '#556', 1.1) + ln('M3 14H9M4 11V15', '#d07038', 1.7),
  pick: sh('M2 5L7 2L10 6L6 9Z', '#eee', '#999', 1) + sh('M8 5V16L11 13L13 17L15 16L13 12H17Z', '#fff', '#333', 1.1),
  swap: sh('M2 6L6 3L9 6L6 9Z', '#dcdff0', '#556', 1.1) + ln('M10 4Q15 2 16 6M4 14H8', '#d08038', 2) + sh('M9 11L13 8L16 11L13 15Z', '#dcdff0', '#778', 1),
  orient: ln('M2 3H9L4 12', '#d8905c', 1.8) + sh('M7 8L11 5L16 11L12 15Z', '#c8d0f0', '#446', 1.1) + ln('M5 13L8 10', '#c05038', 2),
  glow: ln('M2 4L8 5L5 9L9 12', '#d89c50', 1.7) + sh('M9 9L14 8L17 11L15 15H9Z', '#f4e040', '#c8a818', .8),
  ruler: sh('M1 9H17V15H1Z', '#f4e29c', '#a07c28') + ln('M4 12V15M7 12V15M10 12V15M13 12V15', '#a07c28', 1) + ln('M1 5H17M2 2V8M16 2V8', '#223098', 1.4),
  angle: sh('M2 2L7 2L17 14L14 16Z', '#f4e26c', '#a08a28', 1) + ln('M2 3V15H14', '#a84c28', 1.4) + ln('M2 9Q9 9 9 15', '#a84c28', 1.2),

  gears: sh('M2 4L8 3V15L2 13Z', '#999') + ci(12, 6, 3, '#aaa', '#888') + ci(13, 12, 2.500, '#bbb', '#888'),
  snap: sh('M1 2H16V16H1Z', '#ecdcd4', '#a03c30', 1.2) + ln('M8 3V12M3 8H13', '#883028', 1.4) + sh('M8 9H17L14 12V16L11 14V12Z', '#e8c040', '#906c18', .7),
  arrowgray: sh('M3 11L7 7V9H13Q14 7 13 5Q17 9 13 13H7V15Z', '#a0a0a0'),
  house: sh('M1 10L7 4H14L17 8V13L9 15L3 14Z', '#eee', '#333', 1.2) + ln('M7 4L11 9V15M11 9L17 8', '#444', 1.1) + ln('M4 9L9 6', '#d33', 1.6),
  grayplus: ln('M2 7Q5 1 9 5M12 7V16M8 11.500H17', '#999', 1.8) + dots([[3, 8]], '#999'),
  hammer: sh('M2 3L14 2L15 5L10 8L4 7Z', '#999') + ln('M10 7L12 16M15 9V16', '#aaa', 2.4),
  marquee: `<rect x="2" y="3" width="14" height="12" fill="none" stroke="#222" stroke-width="1.500" stroke-dasharray="3 2"/>` + dots([[2, 3], [16, 15]]),
  full: ln('M2 6V2H6M12 2H16V6M16 12V16H12M6 16H2V12', '#444', 1.3) + sh('M5 5H13V13H5Z', '#fff', '#345', 1.6) + sh('M7 7H11V11H7Z', '#3c80c8'),

  ie: ci(9, 9, 7, '#3cb878', '#cdf0dc', 1.5) + ln('M5 9H13Q13 5 9 5T5 9Q6 13 12 12', '#fff', 1.8),
  servers: sh('M2 2H7V15H2ZM9 1H13V14H9Z', '#9ca8c4', '#405090', .8) + ln('M4 16H16', '#dde', 2) + ln('M8 3V16', '#2c3c78', 1.3),
  smile: sh('M2 3H15V13H2Z', '#f0c838', '#7c5410') + dots([[6, 6], [11, 6]], '#322') + ln('M5 9Q9 13 12 9', '#843', 1.4) + sh('M8 12H16V16H8Z', '#d89028'),
  keyboard: sh('M2 8H16V15H2Z', '#eee', '#111') + ln('M4 10H14M4 12H14', '#333', 1.1) + ln('M6 6H10M11 4H14', '#123', 1.2),
  rec: sh('M1 4H17V14H1Z', '#20d040', '#063', .8) + ci(9, 9, 3.500, '#d01818', '#501') + ln('M1 9H4M14 9H17', '#111'),
  net2: sh('M6 2H14V8H6ZM2 7H10V13H2Z', '#3858a8', '#bcd', 1) + ln('M10 10L16 16M16 10L10 16', '#e02828', 2),
  speaker: ci(8, 8, 6, '#8894a4', '#556') + ci(8, 8, 2.500, '#dde') + ln('M13 4Q17 9 14 14', '#ccd', 1.3),
  nvidia: sh('M1 2H17V16H1Z', '#7cb838') + `<ellipse cx="9" cy="9" rx="6" ry="4.500" fill="#e8f4d8" stroke="#3c7c18"/>` + ci(9, 9, 2, '#3c7c18', '#3c7c18'),
  guard: ci(9, 9, 7, '#e8d820', '#88a018') + ln('M9 5V13M5 9H13', '#184818', 2.6)
};

function svg(name) {
  return `<svg viewBox="0 0 18 18" aria-hidden="true">${icons[name]}</svg>`;
}

// | separator, v drop-down arrow, t narrow arrow, V toolbar options, ! pressed
function renderTools(box) {
  box.dataset.tools.split(' ').forEach(token => {
    if (token === '|') {
      box.insertAdjacentHTML('beforeend', '<span class="sep"></span>');
    } else if (token === 'v' || token === 't' || token === 'V') {
      const extra = { v: '', t: ' tight', V: ' over' }[token];
      box.insertAdjacentHTML('beforeend', `<button class="drop${extra}" aria-label="选项"><i class="tri"></i></button>`);
    } else {
      const name = token.replace('!', '');
      const on = name !== token ? ' on' : '';
      box.insertAdjacentHTML('beforeend', `<button class="tool${on}" aria-label="${name}">${svg(name)}</button>`);
    }
  });
}

document.querySelectorAll('[data-tools]').forEach(renderTools);
document.querySelectorAll('[data-icon]').forEach(el => {
  el.innerHTML = svg(el.dataset.icon);
});
```
